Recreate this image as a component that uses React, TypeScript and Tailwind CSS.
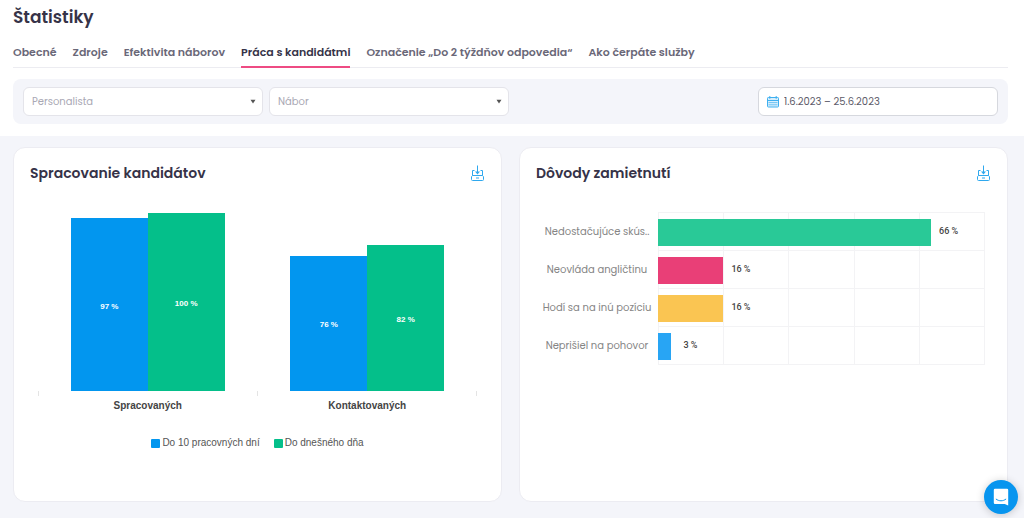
import { useState } from 'react';
import clsx from 'clsx';

const tabs = [
  'Obecné',
  'Zdroje',
  'Efektivita náborov',
  'Práca s kandidátmi',
  'Označenie „Do 2 týždňov odpovedia“',
  'Ako čerpáte služby',
];

const processing = [
  { name: 'Spracovaných', early: 97, today: 100 },
  { name: 'Kontaktovaných', early: 76, today: 82 },
];

// share is the exact value, label is rounded down
const reasons = [
  {
    name: 'Nedostačujúce skús..',
    share: 66.8,
    label: '66 %',
    color: 'bg-[#29c997]',
    labelGap: 'pl-2',
  },
  {
    name: 'Neovláda angličtinu',
    share: 16,
    label: '16 %',
    color: 'bg-[#e93f77]',
    labelGap: 'pl-2',
  },
  {
    name: 'Hodí sa na inú pozíciu',
    share: 16,
    label: '16 %',
    color: 'bg-[#fac552]',
    labelGap: 'pl-2',
  },
  {
    name: 'Neprišiel na pohovor',
    share: 3.3,
    label: '3 %',
    color: 'bg-[#28a5f4]',
    labelGap: 'pl-3',
  },
];

const REASONS_MAX = 80;

export default function App() {
  const [active, setActive] = useState('Práca s kandidátmi');

  return (
    <div className="flex min-h-screen flex-col bg-white font-['Poppins','Inter',sans-serif] text-[#363348]">
      <header className="pt-1 pr-4 pb-3 pl-[13px]">
        <h1 className="text-[17px] leading-[26px] font-semibold">Štatistiky</h1>

        <nav className="mt-2 flex gap-4 border-b border-[#ececf1]">
          {tabs.map((tab) => (
            <a
              key={tab}
              href="#"
              onClick={() => setActive(tab)}
              className={clsx(
                '-mb-px border-b-2 pt-1 pb-1 text-[11px] leading-5 font-semibold whitespace-nowrap',
                tab === active
                  ? 'border-[#ee4b83] text-[#363348]'
                  : 'border-transparent text-[#6a6878]',
              )}
            >
              {tab}
            </a>
          ))}
        </nav>

        <div className="mt-[11px] flex items-center gap-[6px] rounded-lg bg-[#f4f5fa] px-[10px] py-2">
          <FilterSelect label="Personalista" />
          <FilterSelect label="Nábor" />
          <DateRange />
        </div>
      </header>

      <main className="grid grow grid-cols-2 gap-[17px] bg-[#f4f5fa] pt-[11px] pr-4 pb-4 pl-[13px]">
        <Card title="Spracovanie kandidátov">
          <ProcessingChart />
        </Card>
        <Card title="Dôvody zamietnutí">
          <ReasonsChart />
        </Card>
      </main>

      <button
        type="button"
        aria-label="Chat"
        className="fixed right-[6px] bottom-1 flex size-[34px] items-center justify-center rounded-full bg-[#0795ef] shadow-[0_1px_8px_rgba(0,0,0,0.2)]"
      >
        <svg width="16" height="18" viewBox="0 0 16 18" fill="none">
          <path
            d="M2 0.8h12a1.2 1.2 0 0 1 1.2 1.2V17.5l-3.4-1.6H2a1.2 1.2 0 0 1-1.2-1.2V2A1.2 1.2 0 0 1 2 0.8Z"
            fill="#fff"
          />
          <path
            d="M3.2 11.2c2.8 2.2 6.8 2.2 9.6 0"
            stroke="#0795ef"
            strokeLinecap="round"
          />
        </svg>
      </button>
    </div>
  );
}

function FilterSelect({ label }: { label: string }) {
  return (
    <div className="relative w-60">
      <select
        aria-label={label}
        className="block h-[29px] w-full appearance-none rounded-md border border-[#e4e4ea] bg-white px-2 text-[10px] text-[#a9a8b4]"
      >
        <option>{label}</option>
      </select>
      <svg
        className="pointer-events-none absolute top-3 right-[7px]"
        width="6"
        height="5"
        viewBox="0 0 6 5"
      >
        <path d="M0.5 0.8h5L3 4.4Z" fill="#555" />
      </svg>
    </div>
  );
}

function DateRange() {
  return (
    <label className="ml-auto flex h-[29px] w-60 items-center gap-[5px] rounded-md border border-[#d6d8de] bg-white px-2">
      <svg width="12" height="12" viewBox="0 0 12 12" fill="none" stroke="#3fb0f0">
        <rect x="0.5" y="1.5" width="11" height="9.5" rx="0.8" fill="#d9effc" />
        <path d="M0.5 4.5h11" />
        <path d="M2.8 0v2.8M9.2 0v2.8" />
        <path d="M1.5 6.6h9M1.5 8.8h9" strokeWidth="0.7" />
      </svg>
      <input
        aria-label="Obdobie"
        defaultValue="1.6.2023 – 25.6.2023"
        className="min-w-0 grow bg-transparent text-[10px] text-[#5d5b69] outline-none"
      />
    </label>
  );
}

function Card({ title, children }: { title: string; children: React.ReactNode }) {
  return (
    <section className="rounded-xl border border-[#ececf2] bg-white px-4 pt-[15px] pb-4">
      <div className="flex items-center justify-between">
        <h2 className="text-sm leading-5 font-semibold">{title}</h2>
        <button type="button" aria-label="Stiahnuť" className="mr-px">
          <DownloadIcon />
        </button>
      </div>
      {children}
    </section>
  );
}

function DownloadIcon() {
  return (
    <svg width="14" height="16" viewBox="0 0 14 16" fill="none" stroke="#2fa8ee">
      <path d="M7.5 0.5v8" />
      <path d="M5 6.6h5L7.5 9.6Z" fill="#2fa8ee" stroke="none" />
      <path d="M4.5 5.5h-2v5M10.5 5.5h2v5" />
      <path d="M2.5 10.5h10l1 1.2v2.8a1 1 0 0 1-1 1h-10a1 1 0 0 1-1-1v-2.8Z" />
      <path d="M6 13h3" />
    </svg>
  );
}

function ProcessingChart() {
  return (
    <div className="mt-[30px] px-2 font-['Liberation_Sans',sans-serif]">
      <div className="flex">
        {processing.map((group) => (
          <div key={group.name} className="flex-1">
            <div className="flex h-[178px] items-end px-[15%] text-[8px] font-bold text-white">
              <div
                className="flex flex-1 items-center justify-center bg-[#0296ef] pt-1"
                style={{ height: `${group.early}%` }}
              >
                {group.early} %
              </div>
              <div
                className="flex flex-1 items-center justify-center bg-[#04bf8a] pt-1"
                style={{ height: `${group.today}%` }}
              >
                {group.today} %
              </div>
            </div>
          </div>
        ))}
      </div>
      <div className="flex h-[5px] border-r border-[#e4e4e4]">
        <div className="flex-1 border-l border-[#e4e4e4]" />
        <div className="flex-1 border-l border-[#e4e4e4]" />
      </div>
      <div className="mt-1 flex text-center text-[10px] leading-3 font-bold text-[#444]">
        {processing.map((group) => (
          <span key={group.name} className="flex-1">
            {group.name}
          </span>
        ))}
      </div>

      <ul className="mt-[23px] flex justify-center gap-[14px] text-[10px] leading-4 text-[#555]">
        <li className="flex items-center gap-[2px]">
          <span className="size-[9px] rounded-[1px] bg-[#0296ef]" />
          Do 10 pracovných dní
        </li>
        <li className="flex items-center gap-[2px]">
          <span className="size-[9px] rounded-[1px] bg-[#04bf8a]" />
          Do dnešného dňa
        </li>
      </ul>
    </div>
  );
}

function ReasonsChart() {
  return (
    <div className="mt-[29px] flex pr-[6px]">
      <div className="w-[122px] shrink-0">
        {reasons.map((reason) => (
          <div
            key={reason.name}
            className="flex h-[38px] items-center justify-center text-[10px] whitespace-nowrap text-[#858585]"
          >
            {reason.name}
          </div>
        ))}
      </div>

      <div className="grid grow border-t border-[#f3f3f5]">
        <div className="col-start-1 row-start-1 grid grid-cols-5 border-l border-[#f3f3f5]">
          {[...Array(20)].map((_, i) => (
            <div key={i} className="border-r border-b border-[#f3f3f5]" />
          ))}
        </div>
        <div className="col-start-1 row-start-1">
          {reasons.map((reason) => (
            <div key={reason.name} className="flex h-[38px] items-center">
              <div
                className={clsx('h-[27px] shrink-0', reason.color)}
                style={{ width: `${(reason.share / REASONS_MAX) * 100}%` }}
              />
              <span
                className={clsx(
                  "font-['Roboto',sans-serif] text-[9px] font-medium text-[#444]",
                  reason.labelGap,
                )}
              >
                {reason.label}
              </span>
            </div>
          ))}
        </div>
      </div>
    </div>
  );
}
